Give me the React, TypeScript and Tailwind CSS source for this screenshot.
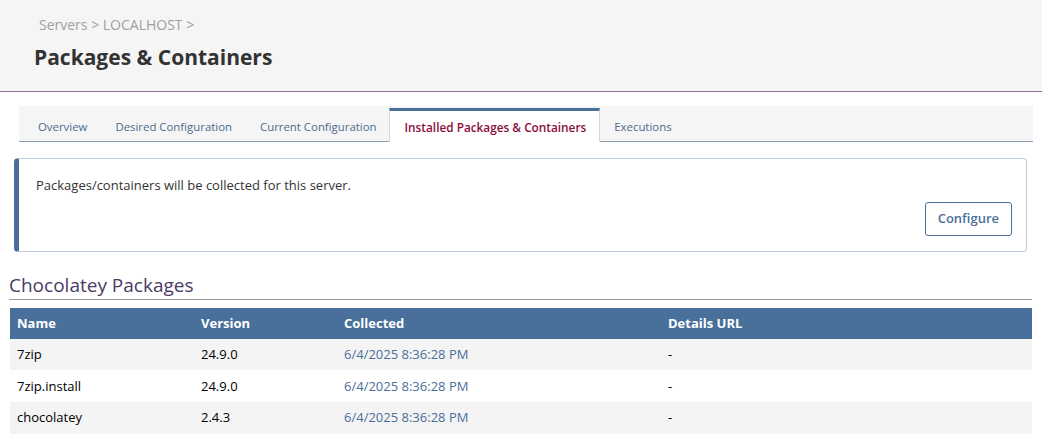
import React from "react";

const rows = [
  { name: "7zip", version: "24.9.0", collected: "6/4/2025 8:36:28 PM", url: "-" },
  { name: "7zip.install", version: "24.9.0", collected: "6/4/2025 8:36:28 PM", url: "-" },
  { name: "chocolatey", version: "2.4.3", collected: "6/4/2025 8:36:28 PM", url: "-" },
];

const tabs = ["Overview", "Desired Configuration", "Current Configuration", "Installed Packages & Containers", "Executions"];

export default function App() {
  return (
    <div className="min-h-screen bg-white text-[#333] font-['Open_Sans',sans-serif]">
      <header className="h-[92px] bg-[#f5f5f5] border-b border-[#8e6fa8] pl-[34px] pt-[14px]">
        <div className="pl-[5px] text-[14px] text-[#a0a0a0]">Servers &gt; LOCALHOST &gt;</div>
        <h1 className="mt-[9px] text-[21px] font-bold text-[#333] leading-tight">Packages &amp; Containers</h1>
      </header>

      <div className="px-[10px] pt-[14px]">
        <nav className="ml-[9px] mr-[-1px] flex h-[36px] pl-[5px] bg-[#f5f5f5] border-b border-[#8a9fb8] text-[11.4px]">
          {tabs.map((t, i) =>
            i === 3 ? (
              <div
                key={t}
                className="-mb-px -ml-[2px] mt-[2px] flex items-center pt-[3px] pl-[15px] pr-[13px] bg-white border-t-[3px] border-t-[#4a6f9a] border-x border-x-[#d6d6d6] text-[11.8px] font-semibold text-[#8b0d3a]"
              >
                {t}
              </div>
            ) : (
              <div key={t} className="flex items-center px-[14px] pt-[6px] text-[#4d6a8c]">
                {t}
              </div>
            )
          )}
        </nav>

        <div className="mt-[16px] ml-[4px] mr-[5px] h-[94px] rounded-[4px] border border-[#bccbdd] border-l-[5px] border-l-[#4a6f9a] flex flex-col pl-[17px] pr-[14px] pt-[17px]">
          <p className="text-[13px] text-[#333]">Packages/containers will be collected for this server.</p>
          <div className="mt-auto mb-[15px] flex justify-end">
            <button className="h-[34px] px-[12px] rounded-[3px] border border-[#4a6f9a] bg-white text-[13px] font-semibold text-[#4a6f9a]">
              Configure
            </button>
          </div>
        </div>

        <h2 className="mt-[22px] -ml-px text-[19px] text-[#4b3a66] border-b border-[#999] pb-[2px] leading-[1.2]">
          Chocolatey Packages
        </h2>

        <table className="mt-[8px] w-full text-[13px] border-collapse">
          <thead>
            <tr className="h-[31px] bg-[#48709b] text-white text-left">
              <th className="w-[191px] pl-[7px] font-bold">Name</th>
              <th className="w-[143px] font-bold">Version</th>
              <th className="w-[324px] font-bold">Collected</th>
              <th className="font-bold">Details URL</th>
            </tr>
          </thead>
          <tbody>
            {rows.map((r, i) => (
              <tr key={r.name} className={`h-[31.7px] ${i % 2 === 0 ? "bg-[#f4f4f4]" : "bg-white"}`}>
                <td className="pl-[7px] text-black">{r.name}</td>
                <td className="text-black">{r.version}</td>
                <td className="text-[#4a6f9a]">{r.collected}</td>
                <td className="text-black">{r.url}</td>
              </tr>
            ))}
          </tbody>
        </table>
      </div>
    </div>
  );
}
